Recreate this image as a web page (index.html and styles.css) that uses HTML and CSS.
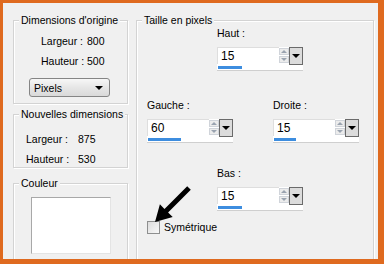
FILE: index.html
```html
<!DOCTYPE html>
<html lang="fr">
<head>
<meta charset="utf-8">
<title>Taille de la bordure</title>
<link rel="stylesheet" href="styles.css">
</head>
<body>
<div class="frame">
  <div class="dialog">
    <div class="left">
      <section class="group g1">
        <div class="title">Dimensions d'origine</div>
        <div class="kv kv1"><span>Largeur :</span><span>800</span></div>
        <div class="kv kv1 next"><span>Hauteur :</span><span>500</span></div>
        <div class="select"><span>Pixels</span><span class="tri"></span></div>
      </section>
      <section class="group g2">
        <div class="title">Nouvelles dimensions</div>
        <div class="kv kv2"><span>Largeur :</span><span>875</span></div>
        <div class="kv kv2 next"><span>Hauteur :</span><span>530</span></div>
      </section>
      <section class="group g3">
        <div class="title">Couleur</div>
        <div class="swatch"></div>
      </section>
    </div>
    <section class="group right">
      <div class="title">Taille en pixels</div>
      <div class="grid">
        <div class="field f-haut">
          <div class="lbl">Haut :</div>
          <div class="ctrl">
            <div class="row"><span class="val">15</span><span class="spin"><i class="up"></i><i class="dn"></i></span><span class="drop"></span></div>
            <div class="strip"><i class="bar" style="width:24px"></i></div>
          </div>
        </div>
        <div class="field f-gauche">
          <div class="lbl">Gauche :</div>
          <div class="ctrl">
            <div class="row"><span class="val">60</span><span class="spin"><i class="up"></i><i class="dn"></i></span><span class="drop"></span></div>
            <div class="strip"><i class="bar" style="width:33px"></i></div>
          </div>
        </div>
        <div class="field f-droite">
          <div class="lbl">Droite :</div>
          <div class="ctrl">
            <div class="row"><span class="val">15</span><span class="spin"><i class="up"></i><i class="dn"></i></span><span class="drop"></span></div>
            <div class="strip"><i class="bar" style="width:22px"></i></div>
          </div>
        </div>
        <div class="field f-bas">
          <div class="lbl">Bas :</div>
          <div class="ctrl">
            <div class="row"><span class="val">15</span><span class="spin"><i class="up"></i><i class="dn"></i></span><span class="drop"></span></div>
            <div class="strip"><i class="bar" style="width:24px"></i></div>
          </div>
        </div>
        <label class="check"><span class="box"></span><span>Symétrique</span></label>
      </div>
      <svg class="arrow" width="40" height="40" viewBox="0 0 40 40">
        <polygon points="3,37 7.9,19.3 12.5,23.9 35.2,1.2 38.8,4.8 16.1,27.5 20.7,32.1" fill="#000"/>
      </svg>
    </section>
  </div>
</div>
</body>
</html>
```

FILE: styles.css
```css
* { box-sizing: border-box; }
html, body { margin: 0; padding: 0; }
body {
  width: 384px;
  height: 264px;
  overflow: hidden;
  font-family: "Liberation Sans", Arial, sans-serif;
  font-size: 10.5px;
  color: #000;
}
.frame {
  width: 384px;
  height: 264px;
  background: #df6a1f;
  padding: 3px 6px 5px 3px;
}
.dialog {
  width: 375px;
  height: 256px;
  background: #f0f0f0;
  overflow: hidden;
  display: flex;
  align-items: flex-start;
  gap: 8px;
  padding: 17px 0 0 10px;
}
.group {
  border: 1px solid #d3d3d3;
  box-shadow: 1px 1px 0 #fff, inset 1px 1px 0 #fff;
  position: relative;
}
.title {
  display: block;
  width: max-content;
  margin: -8px 0 0 5px;
  padding: 0 2px;
  line-height: 14px;
  height: 14px;
  background: #f0f0f0;
  white-space: nowrap;
}
.left {
  width: 115px;
  display: flex;
  flex-direction: column;
}
.g1 { padding-bottom: 6px; }
.kv {
  display: grid;
  line-height: 14px;
  white-space: nowrap;
}
.kv1 { grid-template-columns: 46px auto; padding-left: 27px; margin-top: 7px; }
.kv1.next { margin-top: 6px; }
.select {
  margin: 10px 0 0 15px;
  width: 81px;
  height: 19px;
  border: 1px solid #858585;
  border-radius: 3px;
  background: linear-gradient(#f7f7f7, #e6e6e6 50%, #d9d9d9);
  display: flex;
  align-items: center;
  justify-content: space-between;
  padding: 0 6px 0 4px;
}
.tri {
  width: 0;
  height: 0;
  border-left: 4px solid transparent;
  border-right: 4px solid transparent;
  border-top: 4px solid #000;
}
.g2 { margin-top: 10px; padding-bottom: 1px; }
.kv2 { grid-template-columns: 52px auto; padding-left: 12px; margin-top: 11px; }
.kv2.next { margin-top: 6px; }
.g3 { margin-top: 15px; height: 120px; }
.swatch {
  margin: 7px 0 0 17px;
  width: 80px;
  height: 57px;
  background: #fff;
  border: 1px solid #a8a8a8;
  border-right-color: #e4e4e4;
  border-bottom-color: #e4e4e4;
}
.right {
  width: 238px;
  height: 260px;
}
.grid {
  display: grid;
  grid-template-columns: 70px 56px 86px;
  row-gap: 23px;
  margin: -1px 0 0 10px;
}
.f-haut { grid-column: 2 / 4; }
.f-gauche { grid-column: 1 / 3; margin-top: 4px; }
.f-droite { grid-column: 3; margin-top: 4px; }
.f-bas { grid-column: 2 / 4; }
.field { width: 86px; }
.lbl { line-height: 14px; margin-bottom: 7px; }
.ctrl {
  width: 86px;
  background: #fff;
  border-bottom: 1px solid #cfcfcf;
}
.row {
  display: flex;
  height: 17px;
}
.val {
  flex: 1;
  padding-left: 3px;
  line-height: 17px;
  font-size: 12px;
  border-top: 1px solid #dedede;
  border-left: 1px solid #dedede;
}
.spin {
  width: 10px;
  display: flex;
  flex-direction: column;
  justify-content: center;
  gap: 1px;
  margin: 1px 0;
}
.spin i {
  display: flex;
  align-items: center;
  justify-content: center;
  height: 7px;
  background: #ececec;
  border: 1px solid #d0d4da;
}
.spin i::before {
  content: "";
  border-left: 3px solid transparent;
  border-right: 3px solid transparent;
}
.spin .up::before { border-bottom: 3px solid #9aa3b0; }
.spin .dn::before { border-top: 3px solid #9aa3b0; }
.drop {
  width: 14px;
  height: 18px;
  border: 1px solid #6a6a6a;
  background: #dcdcdc;
  display: flex;
  align-items: center;
  justify-content: center;
}
.drop::before {
  content: "";
  border-left: 4px solid transparent;
  border-right: 4px solid transparent;
  border-top: 4px solid #000;
}
.strip {
  height: 6px;
  padding-top: 2px;
}
.bar {
  display: block;
  height: 3px;
  margin-left: 1px;
  background: #3d8ddf;
}
.check {
  grid-column: 1 / -1;
  margin-top: -14px;
  display: flex;
  align-items: center;
  gap: 4px;
  line-height: 14px;
}
.box {
  width: 13px;
  height: 13px;
  border: 1px solid #8e8f8f;
  background: linear-gradient(135deg, #dcdcdc, #f8f8f8);
}
.arrow {
  position: absolute;
  left: 15px;
  top: 164px;
}
```
